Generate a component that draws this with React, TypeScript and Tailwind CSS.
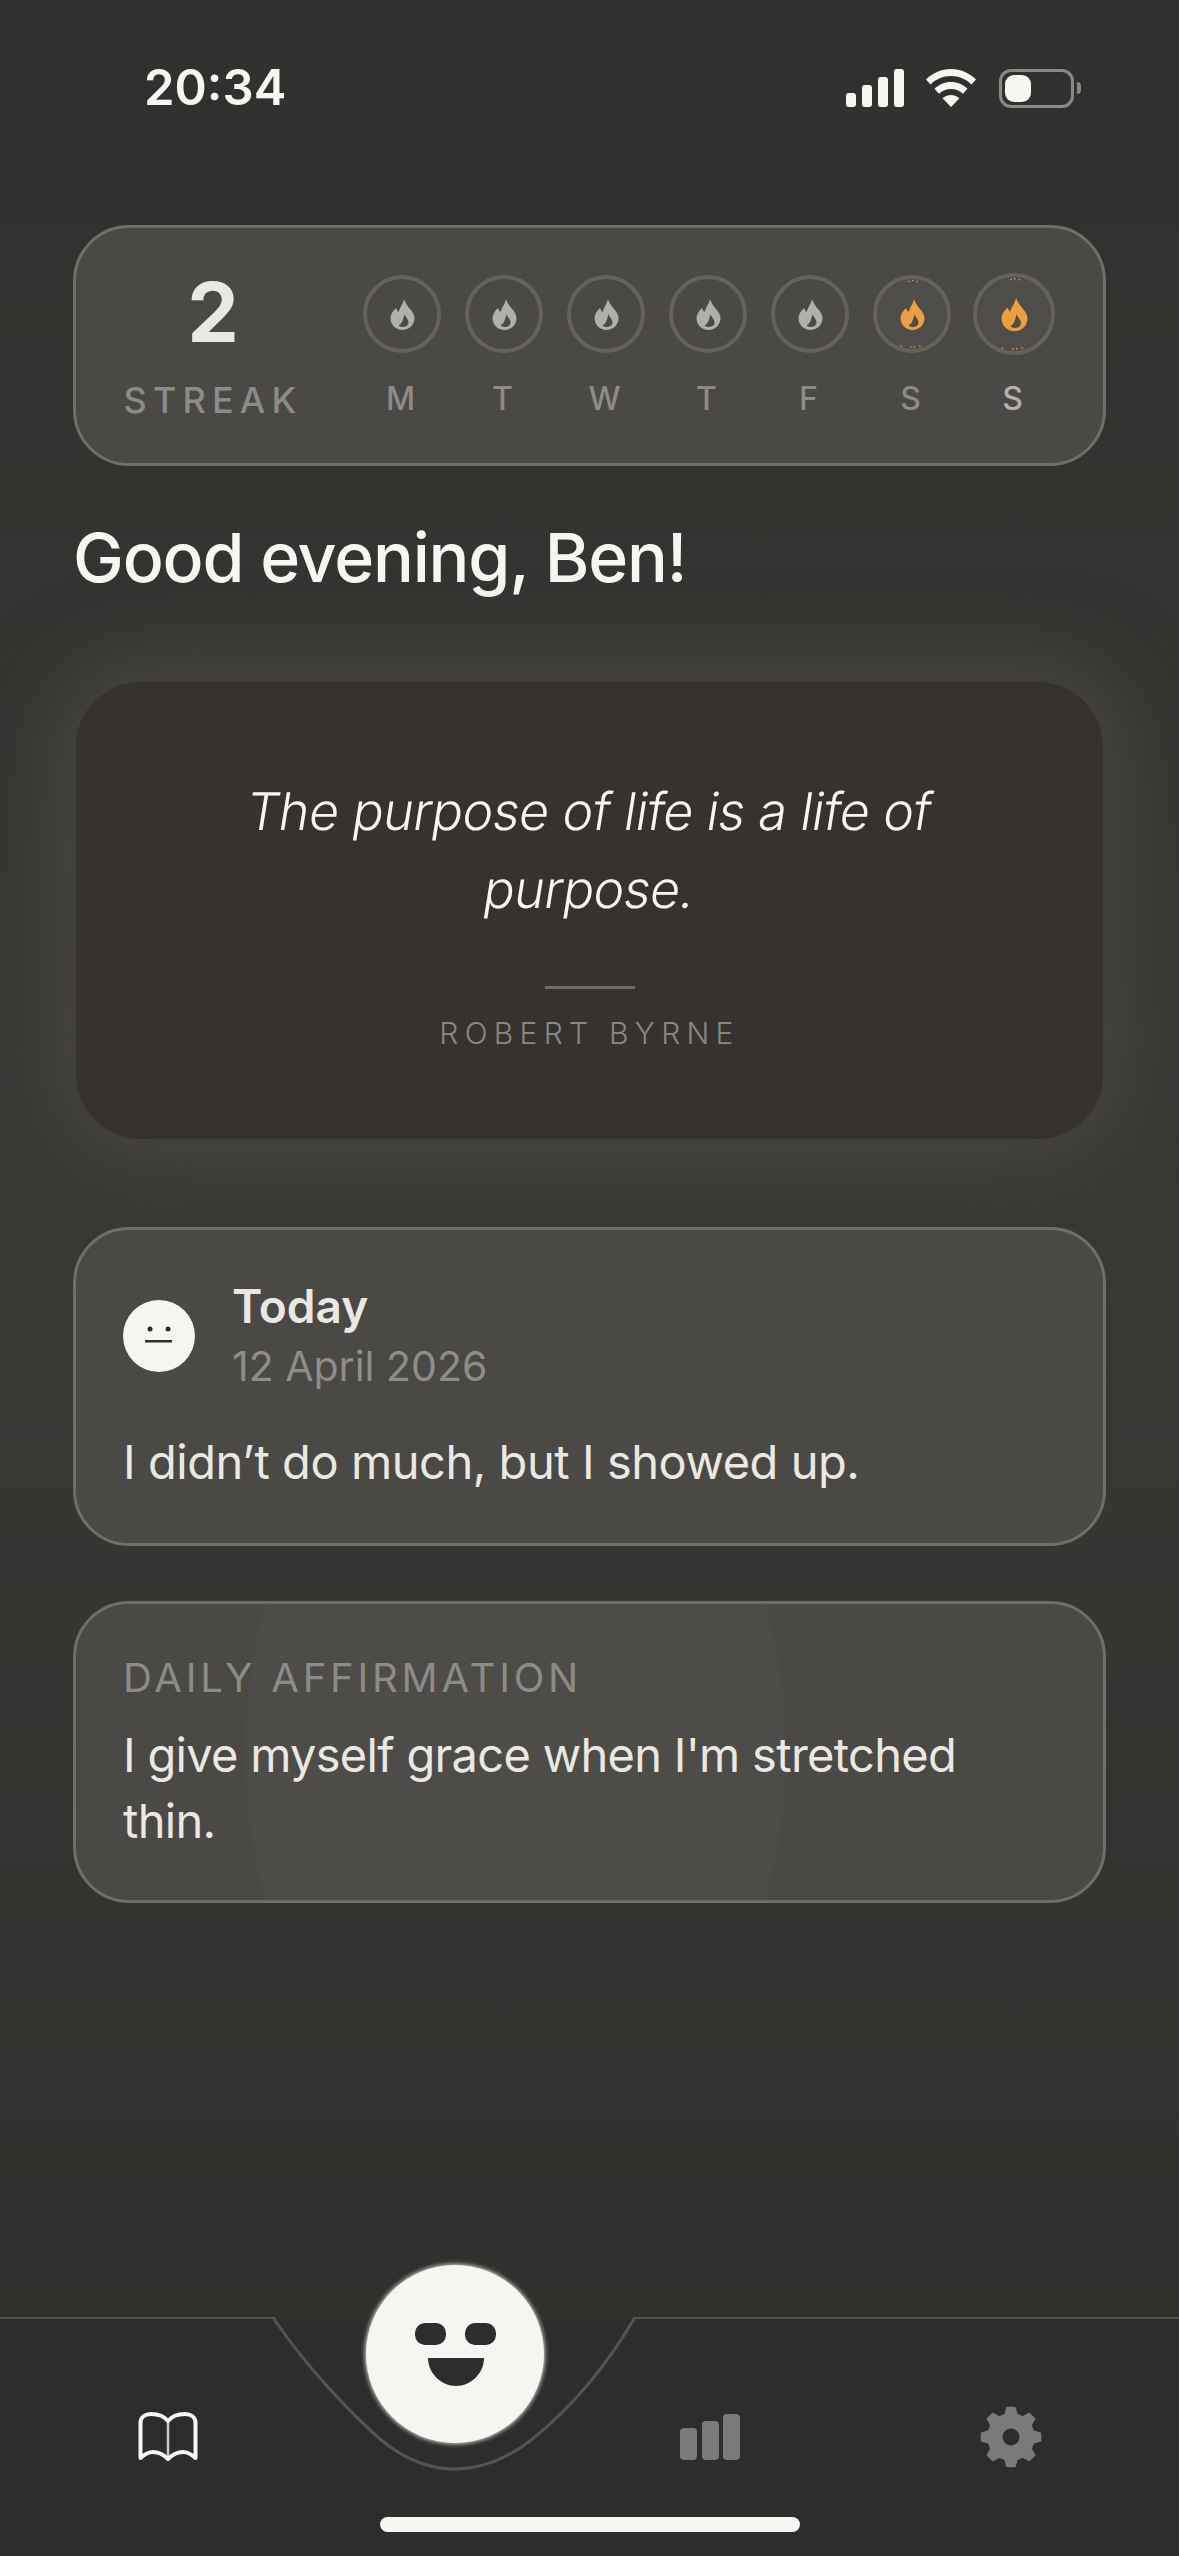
const days = [
  { label: "M", lit: false },
  { label: "T", lit: false },
  { label: "W", lit: false },
  { label: "T", lit: false },
  { label: "F", lit: false },
  { label: "S", lit: true },
  { label: "S", lit: true, today: true },
];

const cardClass =
  "rounded-[56px] border-[3px] border-[#6f6e68] bg-[#4a4945]";

const StatusIcons = () => (
  <div className="flex items-center">
    <svg width="58" height="38" viewBox="0 0 58 38" fill="#f7f6f3">
      <rect x="0" y="24" width="10" height="14" rx="3" />
      <rect x="16" y="16" width="10" height="22" rx="3" />
      <rect x="32" y="8" width="10" height="30" rx="3" />
      <rect x="48" y="0" width="10" height="38" rx="3" />
    </svg>
    <svg className="ml-[22px]" width="50" height="38" viewBox="0 0 50 38" fill="#f7f6f3">
      <path d="M25 0C15.500 0 7 3.800 0 10.500L4.500 15.500C10 10 17 7 25 7s15 3 20.500 8.500L50 10.500C43 3.800 34.500 0 25 0Z" />
      <path d="M25 13c-6.500 0-12 2.500-16.500 6.800L13 24.700c3.200-3 7.300-4.700 12-4.700s8.800 1.700 12 4.700l4.500-4.900C37 15.500 31.500 13 25 13Z" />
      <path d="M25 26c-3.300 0-6.300 1.300-8.500 3.300L25 38l8.500-8.700C31.300 27.300 28.300 26 25 26Z" />
    </svg>
    <div className="ml-[23px] flex items-center">
      <div className="h-[39px] w-[75px] rounded-[12px] border-[3px] border-[#8a8986] p-[3px]">
        <div className="h-full w-[26px] rounded-[9px] bg-[#f7f6f3]" />
      </div>
      <div className="ml-[3px] h-[12px] w-[4px] rounded-r-full bg-[#8a8986]" />
    </div>
  </div>
);

const Flame = ({ className }: { className: string }) => (
  <svg className={className} viewBox="0 0 25 31" fill="currentColor">
    <path
      fillRule="evenodd"
      d="M14 0C13 5 10 8 8.500 13 7.500 12 6.500 10.500 6 9 3 12 .5 15 .5 19c0 7 5.500 12 12 12s12-5 12-12C24.500 12 16 8 14 0ZM14.500 15C15 18 18.500 20 18.500 23.500c0 3-3 4.500-6 4.500-2 0-3.500-1-4-2C11 26 13 22 14.500 15Z"
    />
  </svg>
);

// the little orange specks sitting on the rings of the lit days
const Sparks = () => (
  <svg className="absolute inset-0 h-full w-full" viewBox="0 0 78 78" fill="#ec9f41">
    <rect x="35" y="2" width="1.500" height="1.500" />
    <rect x="39" y="1" width="1.500" height="1.500" />
    <rect x="44" y="2" width="1.500" height="1.500" />
    <rect x="26" y="74" width="1.500" height="1.500" />
    <rect x="37" y="75" width="1.500" height="1.500" />
    <rect x="41" y="75" width="1.500" height="1.500" />
    <rect x="47" y="74" width="1.500" height="1.500" />
  </svg>
);

const DayColumn = ({ label, lit, today }: { label: string; lit: boolean; today?: boolean }) => (
  <div className="flex w-[102px] flex-col items-center">
    <div className="flex h-[82px] items-center justify-center">
      <div
        className={`relative flex items-center justify-center rounded-full border-[4px] border-[#65625c] ${
          today ? "h-[82px] w-[82px] bg-[#4f4d49]" : "h-[78px] w-[78px]"
        } ${lit && !today ? "bg-[#4f4d49]" : ""}`}
      >
        <Flame
          className={`${lit ? "text-[#ec9f41]" : "text-[#b0afab]"} ${today ? "h-[35px] w-[27px]" : "h-[31px] w-[25px]"}`}
        />
        {lit && <Sparks />}
      </div>
    </div>
    <span
      className={`mt-[25px] pr-[3px] text-[32px] leading-[38px] font-medium ${today ? "text-[#b3b2ae]" : "text-[#8c8b87]"}`}
    >
      {label}
    </span>
  </div>
);

const BookIcon = () => (
  <svg width="60" height="50" viewBox="0 0 60 50" fill="none" stroke="#f7f6f3" strokeWidth="4" strokeLinejoin="round" strokeLinecap="round">
    <path stroke="#c9c8c5" strokeWidth="2.500" d="M30 9V47" />
    <path d="M30 9C26 4 20 2 13 2 7 2 2.500 5 2.500 11V46C7 42 11 40 15 40 21 40 26 43 30 47 34 43 39 40 45 40 49 40 53 42 57.500 46V11C57.500 5 53 2 47 2 40 2 34 4 30 9Z" />
  </svg>
);

const BarsIcon = () => (
  <svg width="60" height="46" viewBox="0 0 60 46" fill="#7a7a78">
    <rect x="0" y="14" width="17" height="32" rx="4" />
    <rect x="22" y="7" width="17" height="39" rx="4" />
    <rect x="43" y="0" width="17" height="46" rx="4" />
  </svg>
);

const gearPath = () => {
  const teeth = 8;
  const pts: string[] = [];
  for (let i = 0; i < teeth; i++) {
    const a = (i * 2 * Math.PI) / teeth - Math.PI / 2;
    const step = (2 * Math.PI) / teeth;
    const corners: [number, number][] = [
      [22.5, a - step * 0.3],
      [29, a - step * 0.15],
      [29, a + step * 0.15],
      [22.5, a + step * 0.3],
    ];
    corners.forEach(([r, t]) => pts.push(`${(31 + r * Math.cos(t)).toFixed(2)} ${(31 + r * Math.sin(t)).toFixed(2)}`));
  }
  return `M${pts.join("L")}Z M31 21a10 10 0 1 0 0 20a10 10 0 1 0 0-20Z`;
};

const GearIcon = () => (
  <svg width="62" height="62" viewBox="0 0 62 62" fill="#7a7a78" stroke="#7a7a78" strokeWidth="3" strokeLinejoin="round">
    <path fillRule="evenodd" d={gearPath()} />
  </svg>
);

export default function App() {
  return (
    <div
      className="relative flex h-[2556px] w-[1179px] flex-col overflow-hidden bg-gradient-to-b from-[#31302e] via-[#393835] to-[#2f2e2c]"
      style={{ fontFamily: "Inter, 'Noto Sans', sans-serif" }}
    >
      {/* status bar */}
      <div className="flex items-center justify-between pt-[58px] pr-[98px] pl-[144px]">
        <span className="text-[49px] leading-[60px] font-semibold text-[#f7f6f3]">20:34</span>
        <StatusIcons />
      </div>

      <main className="flex flex-col px-[73px] pt-[107px]">
        {/* streak card */}
        <section className={`flex h-[241px] items-start ${cardClass} pt-[45px] pr-[38px] pl-[47px]`}>
          <div className="flex w-[180px] flex-col items-center">
            <span className="text-[82px] leading-[80px] font-bold text-[#e9e8e3]">2</span>
            <span className="mt-[25px] text-[36px] leading-[44px] font-medium tracking-[0.17em] text-[#8c8b87]">
              STREAK
            </span>
          </div>
          <div className="ml-auto flex">
            {days.map((d, i) => (
              <DayColumn key={i} label={d.label} lit={d.lit} today={d.today} />
            ))}
          </div>
        </section>

        <h1 className="mt-[50px] text-[68px] leading-[82px] font-medium tracking-[-1.2px] text-[#f7f6f3]">
          Good evening, Ben!
        </h1>

        {/* quote card */}
        <section className="mt-[81px] flex h-[463px] flex-col items-center rounded-[68px] border-[3px] border-[#413f3b] bg-[#35322f] pt-[91px] shadow-[0_0_80px_16px_#4a4840]">
          <p className="text-center text-[52px] leading-[78px] font-light tracking-[-0.6px] text-[#f7f6f3]">
            <span className="block -skew-x-[9deg]">The purpose of life is a life of</span>
            <span className="block -skew-x-[9deg]">purpose.</span>
          </p>
          <div className="mt-[57px] h-[3px] w-[90px] bg-[#6e6c65]" />
          <p className="mt-[26px] text-[30px] leading-[36px] font-light tracking-[0.21em] text-[#8a8883]">
            ROBERT BYRNE
          </p>
        </section>

        {/* today card */}
        <section className={`mt-[85px] h-[319px] ${cardClass} px-[47px] pt-[46px]`}>
          <div className="flex items-center">
            <div className="flex h-[72px] w-[72px] items-center justify-center rounded-full bg-[#f6f5f2]">
              <svg width="30" height="20" viewBox="0 0 30 20" fill="#2e2d2b">
                <circle cx="6" cy="3" r="2.500" />
                <circle cx="24" cy="3" r="2.500" />
                <rect x="1" y="14" width="27" height="2.500" />
              </svg>
            </div>
            <div className="ml-[37px] flex flex-col">
              <span className="text-[46px] leading-[60px] font-semibold text-[#e9e8e3]">Today</span>
              <span className="text-[41px] leading-[60px] text-[#8e8d89]">12 April 2026</span>
            </div>
          </div>
          <p className="mt-[36px] text-[47px] leading-[60px] tracking-[-0.45px] text-[#e9e8e3]">
            I didn&rsquo;t do much, but I showed up.
          </p>
        </section>

        {/* affirmation card */}
        <section className={`relative mt-[55px] h-[302px] overflow-hidden ${cardClass} px-[47px] pt-[51px]`}>
          <div className="absolute -top-[240px] -bottom-[240px] left-[169px] w-[541px] rounded-[50%] bg-[#4d4c48]" />
          <div className="relative">
            <p className="text-[40px] leading-[46px] tracking-[0.095em] text-[#8c8b87]">DAILY AFFIRMATION</p>
            <p className="mt-[21px] text-[47px] leading-[66px] tracking-[-0.7px] text-[#e9e8e3]">
              I give myself grace when I'm stretched thin.
            </p>
          </div>
        </section>
      </main>

      {/* tab bar */}
      <nav className="relative mt-auto h-[239px] border-t-2 border-[#55544f] bg-[#2d2d2d]">
        <div className="absolute top-[-2px] left-[275px] h-[3px] w-[358px] bg-[#32312f]" />
        <svg className="absolute top-[-2px] left-[270px]" width="370" height="157" viewBox="0 0 370 157" fill="#2d2d2d">
          <path
            d="M4 2C40 55 85 100 110 122 135 143 160 152 185 152 210 152 235 143 260 124 290 100 330 60 364 2"
            stroke="#55544f"
            strokeWidth="3"
          />
        </svg>
        <div className="absolute top-[-54px] left-[366px] flex h-[178px] w-[178px] items-center justify-center rounded-full bg-[#f6f5f2] shadow-[0_0_4px_1px_#d5d4d1]">
          <svg width="81" height="63" viewBox="0 0 81 63" fill="#2d2d2d">
            <rect x="0" y="0" width="31" height="22" rx="10" />
            <rect x="50" y="0" width="31" height="22" rx="10" />
            <path d="M13 35H69C69 50 56 63 41 63 26 63 13 50 13 35Z" />
          </svg>
        </div>
        <div className="flex items-center pt-[87px] pr-[137px] pl-[138px]">
          <BookIcon />
          <div className="ml-[482px]">
            <BarsIcon />
          </div>
          <div className="ml-auto">
            <GearIcon />
          </div>
        </div>
        <div className="absolute bottom-[24px] left-[380px] h-[15px] w-[420px] rounded-full bg-[#f7f6f3]" />
      </nav>
    </div>
  );
}
